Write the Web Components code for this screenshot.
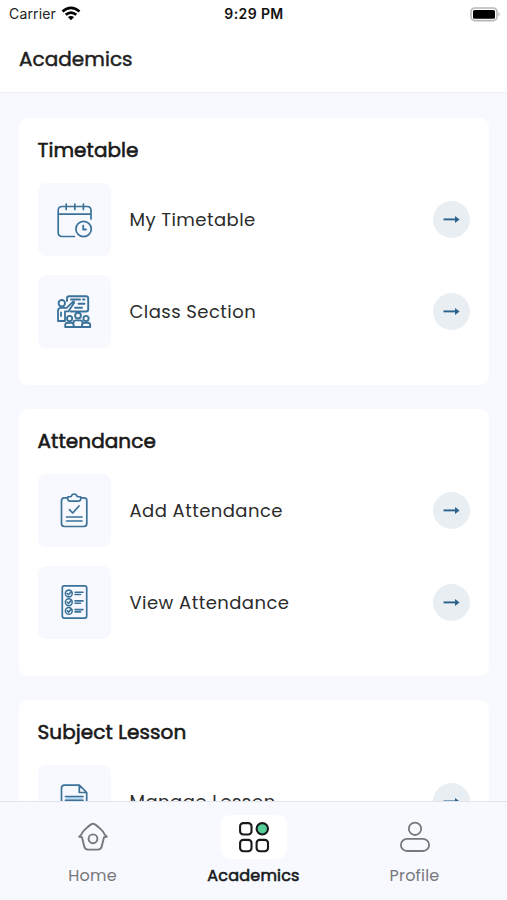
<!DOCTYPE html>
<html lang="en"><head><meta charset="utf-8"><title>Academics</title>
<style>
html,body{margin:0;height:100%;overflow:hidden;background:#f8f9fe}
body{font-family:Poppins,Inter,"Liberation Sans",sans-serif;color:#212121}
</style></head><body>
<academics-app></academics-app>
<script>
const define=(name,html,init)=>customElements.define(name,class extends HTMLElement{
  connectedCallback(){
    if(this.shadowRoot)return;
    const t=document.createElement('template');
    t.innerHTML=html;
    this.attachShadow({mode:'open'}).append(t.content.cloneNode(true));
    if(init)init(this,this.shadowRoot);
  }
});
const blue='fill="none" stroke="#3a7299" stroke-width="1.7" stroke-linecap="round" stroke-linejoin="round"';
const ICONS={
calendar:`<svg width="36" height="36" viewBox="0 0 36 36" ${blue}><path d="M17.5 34.5H5.2Q1.2 34.5 1.2 30.5V8.5Q1.2 4.5 5.2 4.5H30Q34 4.5 34 8.5V17M1.2 12.2H34M9.2 2V7.5M17.8 2V7.5M26.4 2V7.5"/><circle cx="26.6" cy="27" r="7.7"/><path d="M26.2 23.6V27.5H29" stroke-width="1.8"/></svg>`,
classroom:`<svg width="36" height="36" viewBox="1 0 36 36" ${blue}><path d="M11 7V4.5Q11 2.2 13.3 2.2H30Q32.2 2.2 32.2 4.5V15.2Q32.2 17.5 30 17.5H14.5M15 5.5H24M27 5.5H28.5M22.5 9.8H28.5M19 13.7H26" stroke-width="1.9"/><circle cx="5.8" cy="9.2" r="3.2" stroke-width="1.9"/><path d="M9 27H2V17Q2 13.8 5 13.8H10.7L17.3 7.3L18.3 8.4L12.5 17.3H9V27M5 18.5V22" stroke-width="1.8"/><g stroke-width="1.9"><circle cx="13.6" cy="24.5" r="2.6"/><circle cx="22" cy="21.6" r="2.9"/><circle cx="30" cy="24.5" r="2.6"/><path d="M9.2 33V31.2Q9.2 28.8 12 28.8H15Q17.6 28.8 17.6 31.2V33ZM17.5 30V28.5Q17.5 26.4 20 26.4H24Q26.5 26.4 26.5 28.5V30M26 33V31.2Q26 28.8 28.5 28.8H31.5Q34.2 28.8 34.2 31.2V33ZM18 33H25.5"/></g></svg>`,
clipboard:`<svg width="36" height="36" viewBox="0.5 0 36 36" ${blue}><path d="M11 4.8H7.8Q5 4.8 5 7.6V30.5Q5 33.5 8 33.5H27.3Q30.3 33.5 30.3 30.5V7.6Q30.3 4.8 27.5 4.8H24.3M11.2 4V6Q11.5 8.2 13.5 8.2H21.8Q24 8.2 24.2 6V4Q23.5 3.5 20.7 3.5Q20 1 17.7 1Q15.4 1 14.7 3.5Q12 3.5 11.2 4ZM13 16.7L16.2 20L22.5 13M10 24H25.5M10 28H25.5"/></svg>`,
checklist:`<svg width="36" height="36" viewBox="0.5 0.5 36 36" ${blue}><rect x="5.8" y="1.4" width="24.4" height="32.2" rx="2"/><g stroke-width="1.6"><circle cx="12.3" cy="9" r="3.4"/><circle cx="12.3" cy="17.7" r="3.4"/><circle cx="12.3" cy="26.4" r="3.4"/><path d="M10.8 9L12 10.2L14.7 7.2M10.8 17.7L12 18.9L14.7 15.9M10.8 26.4L12 27.6L14.7 24.6M18.5 7.7H26.5M18.5 10H24M18.5 16.4H26.5M18.5 18.7H24M18.5 25.1H26.5M18.5 27.4H24"/></g></svg>`,
document:`<svg width="36" height="36" viewBox="0.5 0.5 36 36" ${blue}><path d="M9 13.5H26.5V17H9Z" fill="#bfdcf2" stroke="none"/><path d="M8 1.6H22.8L30.2 9V31Q30.2 34 27.2 34H8Q5 34 5 31V4.6Q5 1.6 8 1.6ZM22.8 1.6V9H30.2M9 13H26.5M9 16.8H26.5M9 21H26.5"/></svg>`,
home:`<svg width="32" height="32" viewBox="0 0 32 32" fill="none" stroke="#77787c" stroke-width="1.9" stroke-linejoin="round" stroke-linecap="round"><path d="M2.2 15.6Q3.8 14.8 5 12.4Q5.8 10.6 7.6 8.9Q12.4 4.3 14.6 3.1Q16 2.3 17.4 3.1Q19.6 4.3 24.4 8.9Q26.2 10.6 27 12.4Q28.2 14.8 29.8 15.6M2.4 15.8L5 16.2L7.2 25.2Q8 28.6 11 28.6H21Q24 28.6 24.8 25.2L27 16.2L29.6 15.8"/><circle cx="16" cy="17.8" r="4.4"/></svg>`,
grid:`<svg width="32" height="32" viewBox="0 0 32 32" fill="none" stroke="#17191d" stroke-width="2.1"><rect x="2.1" y="2.1" width="11.4" height="11.4" rx="3.2"/><circle cx="24.3" cy="7.8" r="5.7" fill="#55cf98"/><rect x="2.1" y="18.9" width="11.4" height="11.4" rx="3.2"/><rect x="18.6" y="18.9" width="11.4" height="11.4" rx="3.2"/></svg>`,
profile:`<svg width="32" height="32" viewBox="0 0 32 32" fill="none" stroke="#77787c" stroke-width="1.8"><circle cx="16" cy="7.8" r="6.2"/><rect x="1.9" y="17.8" width="28.2" height="12.2" rx="6.1"/></svg>`,
arrow:`<svg width="19" height="11" viewBox="0 0 19 11"><path d="M1.5 5.4H14" stroke="#2c638c" stroke-width="1.9"/><path d="M13 1.9L17.6 5.4L13 8.9Z" fill="#2c638c"/></svg>`,
wifi:`<svg width="20" height="15" viewBox="0 0 20 15" fill="none" stroke="#000" stroke-width="2.7"><path d="M1.5 5.5Q10-1.8 18.5 5.5M4.7 8.8Q10 4.4 15.3 8.8"/><path d="M6.9 11.1Q10 8.8 13.1 11.1L10 14.2Z" fill="#000" stroke="none"/></svg>`,
battery:`<svg width="31" height="15" viewBox="0 0 31 15"><rect x="1" y="1" width="26" height="12.6" rx="3.8" fill="#fff" stroke="#b8b8b8" stroke-width="1.6"/><rect x="3" y="3" width="22" height="8.7" rx="1.5" fill="#000"/><path d="M28.5 5Q30.8 7.2 28.5 9.4Z" fill="#aaa"/></svg>`
};
define('ui-icon','<style>:host{display:block;line-height:0}svg{display:block}</style>',
 (el,r)=>r.append(Object.assign(document.createElement('template'),{innerHTML:ICONS[el.getAttribute('name')]}).content));
define('status-bar',`<style>:host{display:grid;grid-template-columns:1fr auto 1fr;align-items:center;height:28px;padding:0 6px 0 9px;box-sizing:border-box;font:400 14px/28px Inter,sans-serif;color:#222}
.l{display:flex;align-items:center;gap:5px;letter-spacing:.15px}.t{font-weight:600;font-size:14px;letter-spacing:.4px;color:#111;margin-right:2px}ui-icon.b{justify-self:end}ui-icon.w{margin-top:-2px}</style>
<div class="l"><span>Carrier</span><ui-icon class="w" name="wifi"></ui-icon></div><span class="t">9:29 PM</span><ui-icon class="b" name="battery"></ui-icon>`);
define('page-header',`<style>:host{display:block;background:#fff;height:93px;box-sizing:border-box;border-bottom:1px solid #f0f1f5;flex:none}h1{margin:0;padding:15px 19px 0;font-size:20px;line-height:32px;font-weight:400;-webkit-text-stroke:.5px currentColor;letter-spacing:.05px;color:#1f1f1f}</style><status-bar></status-bar><h1><slot></slot></h1>`);
define('menu-row',`<style>:host{display:flex;align-items:center;height:73px}.tile{width:73px;height:73px;border-radius:8px;background:#f8f9fe;display:grid;place-items:center;flex:none}.tile ui-icon{padding:0 0 0 1px}.label{flex:1;padding-left:19px;font-size:18px;line-height:28px;letter-spacing:.45px;color:#2b2b2b}.go{width:37px;height:37px;border-radius:50%;background:#e9eef3;display:grid;place-items:center}</style><div class="tile"></div><span class="label"><slot></slot></span><div class="go"><ui-icon name="arrow"></ui-icon></div>`,
 (el,r)=>{const i=document.createElement('ui-icon');i.setAttribute('name',el.getAttribute('icon'));r.querySelector('.tile').append(i);});
define('menu-card',`<style>:host{display:block;box-sizing:border-box;height:267px;border-radius:9px;background:#fff;padding:17px 19px 0 18.5px}h2{margin:0 0 18px;font-size:20px;line-height:30px;font-weight:400;-webkit-text-stroke:.6px currentColor;letter-spacing:.08px;color:#191919}.rows{display:grid;gap:19px}</style><h2></h2><div class="rows"><slot></slot></div>`,
 (el,r)=>r.querySelector('h2').textContent=el.getAttribute('heading'));
define('nav-item',`<style>:host{display:flex;flex-direction:column;align-items:center;width:161px;color:#77787c;font-size:16px;line-height:24px;letter-spacing:.2px}.pill{width:66px;height:44px;border-radius:9px;display:grid;place-items:center;margin-bottom:5px}:host([active]){color:#17191d;-webkit-text-stroke:.6px currentColor}:host([active]) .pill{background:#fff}</style><div class="pill"></div><span><slot></slot></span>`,
 (el,r)=>{const i=document.createElement('ui-icon');i.setAttribute('name',el.getAttribute('icon'));r.querySelector('.pill').append(i);});
define('bottom-nav',`<style>:host{display:flex;justify-content:center;flex:none;box-sizing:border-box;height:99px;border-top:1px solid #e2e4eb;background:#f8f9fe;padding-top:13px}</style><slot></slot>`);
define('academics-app',`<style>:host{display:flex;flex-direction:column;height:100vh}main{flex:1;min-height:0;overflow:hidden;padding:25px 18px 0 19px;display:flex;flex-direction:column;gap:24px}menu-card{flex:none}</style>
<page-header>Academics</page-header>
<main>
<menu-card heading="Timetable"><menu-row icon="calendar">My Timetable</menu-row><menu-row icon="classroom">Class Section</menu-row></menu-card>
<menu-card heading="Attendance"><menu-row icon="clipboard">Add Attendance</menu-row><menu-row icon="checklist">View Attendance</menu-row></menu-card>
<menu-card heading="Subject Lesson"><menu-row icon="document">Manage Lesson</menu-row></menu-card>
</main>
<bottom-nav><nav-item icon="home">Home</nav-item><nav-item icon="grid" active>Academics</nav-item><nav-item icon="profile">Profile</nav-item></bottom-nav>`);
</script></body></html>
